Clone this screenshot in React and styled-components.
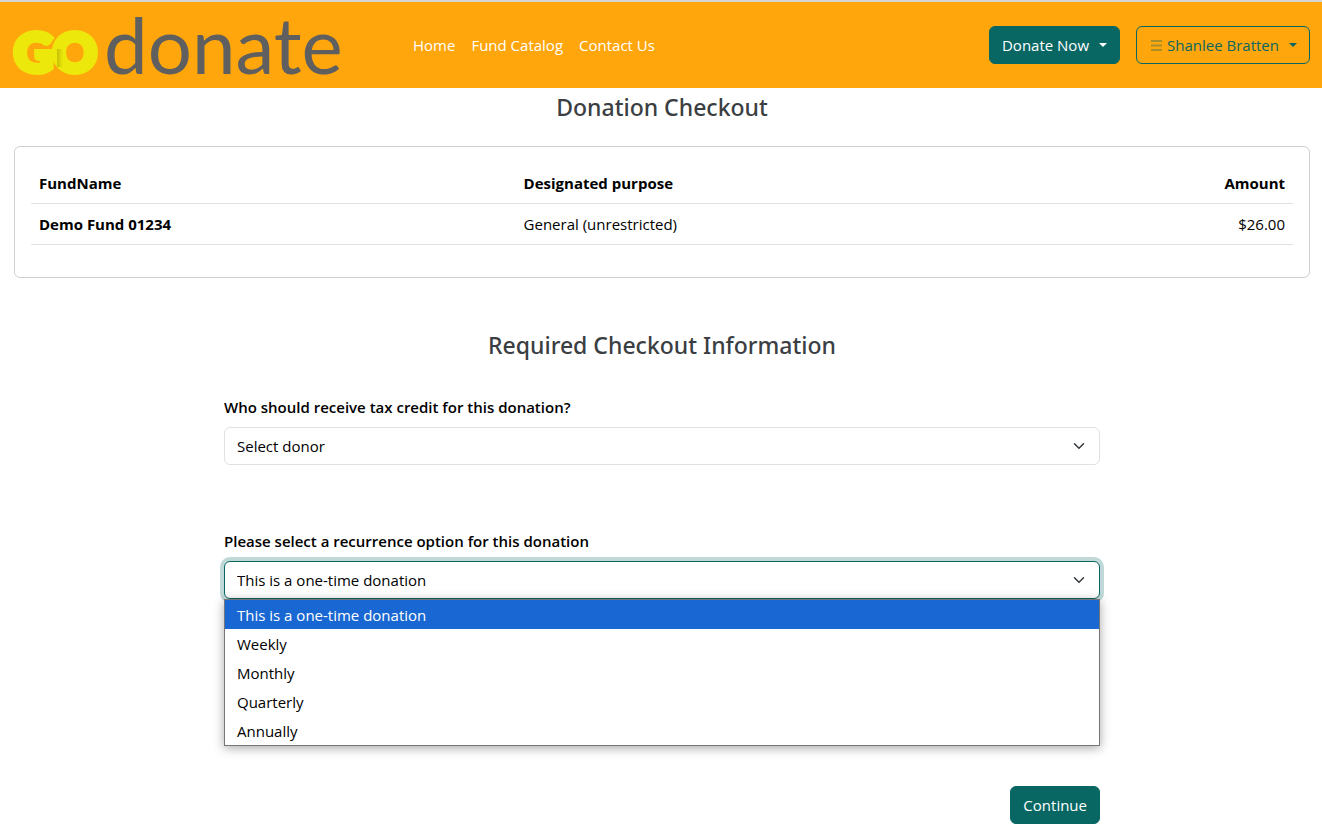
import { useState } from "react";
import styled, { createGlobalStyle, css } from "styled-components";

const GlobalStyle = createGlobalStyle`
  :root {
    --orange: #ffa60c;
    --teal: #086663;
    --yellow: #ece80b;
    --gray: #5f5f5f;
    --border: #dee2e6;
    --heading: #3b3e42;
  }

  *, *::before, *::after {
    box-sizing: border-box;
  }

  body {
    margin: 0;
    background: #fff;
    color: #000;
    font-family: "Open Sans", "Noto Sans", sans-serif;
    font-size: 15px;
    line-height: 24px;
  }
`;

const Navbar = styled.header`
  display: flex;
  align-items: center;
  min-height: 88px;
  padding: 0 12px 0 14px;
  border-top: 2px solid #d5d5d5;
  background: var(--orange);
`;

const Brand = styled.a`
  display: block;
  margin-right: 61px;

  & svg {
    display: block;
    overflow: visible;
  }
`;

const NavLinks = styled.nav`
  display: flex;
  flex: 1;

  & a {
    padding: 8px;
    color: #fff;
    text-decoration: none;
  }
`;

const NavActions = styled.div`
  display: flex;
  gap: 16px;
`;

const Button = styled.button`
  display: inline-flex;
  align-items: center;
  height: 38px;
  padding: 0 12px;
  border: 1px solid var(--teal);
  border-radius: 6px;
  background: ${props => props.$outline ? "transparent" : "var(--teal)"};
  color: ${props => props.$outline ? "var(--teal)" : "#fff"};
  font: inherit;
  cursor: pointer;
`;

const Caret = styled.span`
  margin-left: 10px;
  border-top: 4px solid;
  border-left: 4px solid transparent;
  border-right: 4px solid transparent;
`;

const MenuIcon = styled.svg`
  margin: 0 5px 0 2px;
  opacity: 0.35;
`;

const Main = styled.main`
  padding: 0 12px 12px 14px;
`;

const Title = styled.h1`
  margin: 0;
  color: var(--heading);
  font-family: "Noto Sans", sans-serif;
  font-size: 23px;
  font-weight: 500;
  line-height: 38px;
  text-align: center;
`;

const Card = styled.section`
  margin-top: 20px;
  padding: 16px 16px 32px;
  border: 1px solid #d0d1d2;
  border-radius: 6px;
`;

const FundTable = styled.table`
  width: 100%;
  border-collapse: collapse;
  table-layout: fixed;

  & th,
  & td {
    padding: 8px;
    border-bottom: 1px solid var(--border);
    text-align: left;
  }

  & th {
    font-weight: 700;
  }

  & th:first-child {
    width: 38.4%;
  }

  & th:last-child,
  & td:last-child {
    text-align: right;
  }
`;

const Form = styled.form`
  max-width: 876px;
  margin: 0 auto;
`;

const FormTitle = styled(Title).attrs({ as: "h2" })`
  margin: 48px 0 31px;
`;

const Field = styled.div`
  margin-bottom: 64px;

  & label {
    display: block;
    margin-bottom: 8px;
    font-weight: 600;
  }
`;

const SelectWrap = styled.div`
  position: relative;
`;

const Select = styled.select`
  display: block;
  width: 100%;
  height: 38px;
  padding: 0 36px 0 12px;
  border: 1px solid var(--border);
  border-radius: 6px;
  outline: 0;
  appearance: none;
  background: #fff;
  color: #000;
  font: inherit;

  ${props => props.$open && css`
    border-color: var(--teal);
    box-shadow: 0 0 0 4px #c1d8d8;
  `}
`;

const Chevron = styled.svg`
  position: absolute;
  top: 13px;
  right: 15px;
  pointer-events: none;
`;

const Options = styled.ul`
  position: absolute;
  top: 100%;
  left: 0;
  right: 0;
  margin: 0;
  padding: 0;
  border: 1px solid #767676;
  background: #fff;
  box-shadow: 0 2px 10px rgba(0, 0, 0, 0.35);
  list-style: none;
`;

const Option = styled.li`
  padding: 1px 12px 0;
  background: ${props => props.$selected ? "#1967d2" : "#fff"};
  color: ${props => props.$selected ? "#fff" : "#000"};
  line-height: 28px;
  cursor: default;
`;

const Actions = styled.div`
  display: flex;
  justify-content: flex-end;
  margin-top: 187px;
`;

const recurrences = [
  "This is a one-time donation",
  "Weekly",
  "Monthly",
  "Quarterly",
  "Annually",
];

function Logo() {
  return (
    <svg width="330" height="70" viewBox="0 0 330 70" role="img" aria-label="GO donate">
      <defs>
        <linearGradient id="fold">
          <stop offset="0" stopColor="#8a8400" stopOpacity="0.4" />
          <stop offset="1" stopColor="#8a8400" stopOpacity="0" />
        </linearGradient>
      </defs>
      <g fontFamily="Lato, sans-serif">
        <text x="0" y="62" fill="var(--yellow)" stroke="var(--yellow)" strokeWidth="6" fontSize="54" fontWeight="900">GO</text>
        <path d="M43 39h6v18h-6z" fill="url(#fold)" />
        <text x="90" y="64" fill="var(--gray)" fontSize="78">donate</text>
      </g>
    </svg>
  );
}

function SelectChevron() {
  return (
    <Chevron width="12" height="12" viewBox="0 0 16 16" fill="none" stroke="#343a40" strokeWidth="2" strokeLinecap="round" strokeLinejoin="round">
      <path d="m2 5 6 6 6-6" />
    </Chevron>
  );
}

function RecurrenceSelect() {
  const [open, setOpen] = useState(true);
  const [value, setValue] = useState(recurrences[0]);

  const toggle = (e) => {
    e.preventDefault();
    setOpen(!open);
  };

  const choose = (option) => {
    setValue(option);
    setOpen(false);
  };

  return (
    <SelectWrap>
      <Select
        id="recurrence"
        $open={open}
        value={value}
        onMouseDown={toggle}
        onChange={(e) => setValue(e.target.value)}
      >
        {recurrences.map((option) => (
          <option key={option}>{option}</option>
        ))}
      </Select>
      <SelectChevron />
      {open && (
        <Options role="listbox">
          {recurrences.map((option) => (
            <Option
              key={option}
              role="option"
              aria-selected={option === value}
              $selected={option === value}
              onClick={() => choose(option)}
            >
              {option}
            </Option>
          ))}
        </Options>
      )}
    </SelectWrap>
  );
}

function App() {
  return (
    <>
      <GlobalStyle />

      <Navbar>
        <Brand href="#home"><Logo /></Brand>
        <NavLinks>
          <a href="#home">Home</a>
          <a href="#funds">Fund Catalog</a>
          <a href="#contact">Contact Us</a>
        </NavLinks>
        <NavActions>
          <Button type="button">Donate Now<Caret /></Button>
          <Button type="button" $outline>
            <MenuIcon width="11" height="11" viewBox="0 0 11 11" stroke="currentColor" strokeWidth="2">
              <path d="M0 1h11M0 5.5h11M0 10h11" />
            </MenuIcon>
            Shanlee Bratten<Caret />
          </Button>
        </NavActions>
      </Navbar>

      <Main>
        <Title>Donation Checkout</Title>

        <Card>
          <FundTable>
            <thead>
              <tr>
                <th scope="col">FundName</th>
                <th scope="col">Designated purpose</th>
                <th scope="col">Amount</th>
              </tr>
            </thead>
            <tbody>
              <tr>
                <th scope="row">Demo Fund 01234</th>
                <td>General (unrestricted)</td>
                <td>$26.00</td>
              </tr>
            </tbody>
          </FundTable>
        </Card>

        <Form onSubmit={(e) => e.preventDefault()}>
          <FormTitle>Required Checkout Information</FormTitle>

          <Field>
            <label htmlFor="donor">Who should receive tax credit for this donation?</label>
            <SelectWrap>
              <Select id="donor">
                <option>Select donor</option>
              </Select>
              <SelectChevron />
            </SelectWrap>
          </Field>

          <Field>
            <label htmlFor="recurrence">Please select a recurrence option for this donation</label>
            <RecurrenceSelect />
          </Field>

          <Actions>
            <Button type="submit">Continue</Button>
          </Actions>
        </Form>
      </Main>
    </>
  );
}

export default App;
